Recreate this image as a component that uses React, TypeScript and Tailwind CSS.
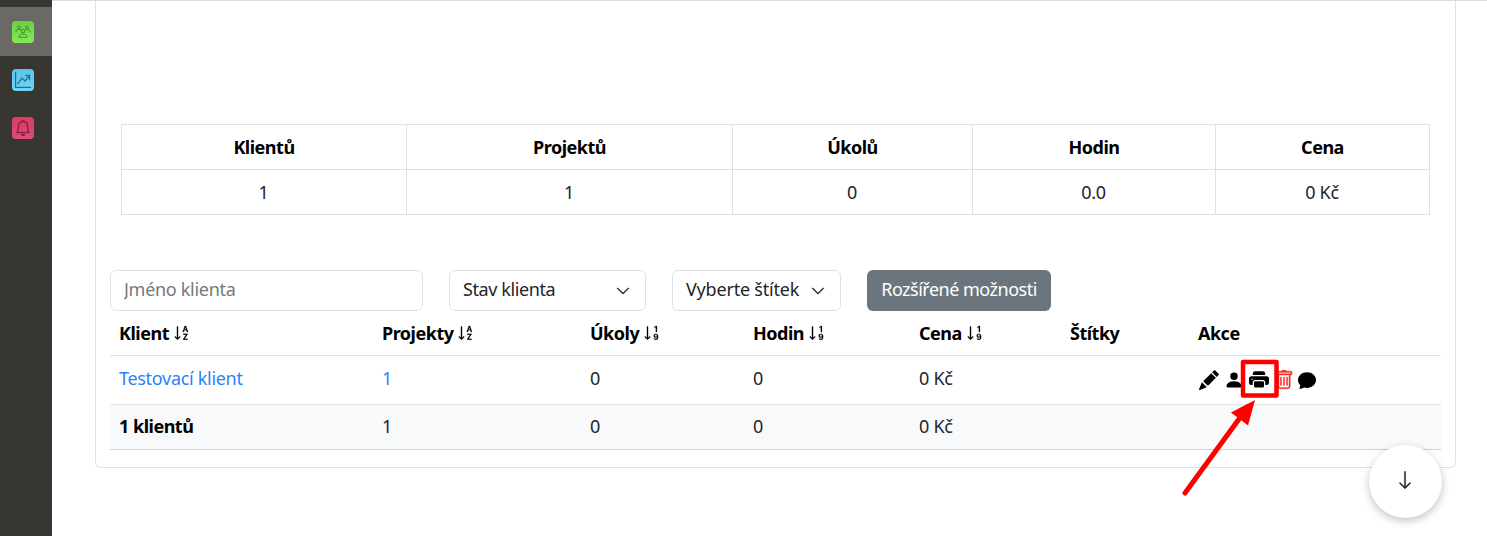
import React from "react";
import {
  BsArrowDown,
  BsBell,
  BsChatFill,
  BsChevronDown,
  BsGraphUpArrow,
  BsPencilFill,
  BsPersonFill,
  BsPrinterFill,
  BsSortAlphaDown,
  BsSortNumericDown,
  BsTrash,
} from "react-icons/bs";

const summary = [
  { label: "Klientů", value: "1", width: "w-[285px]" },
  { label: "Projektů", value: "1", width: "w-[326px]" },
  { label: "Úkolů", value: "0", width: "w-[240px]" },
  { label: "Hodin", value: "0.0", width: "w-[243px]" },
  { label: "Cena", value: "0 Kč", width: "w-[214px]" },
];

const columns = [
  { label: "Klient", sort: "alpha" },
  { label: "Projekty", sort: "alpha" },
  { label: "Úkoly", sort: "numeric" },
  { label: "Hodin", sort: "numeric" },
  { label: "Cena", sort: "numeric" },
  { label: "Štítky", sort: null },
  { label: "Akce", sort: null },
];

const grid = "grid grid-cols-[263px_208px_163px_166px_151px_128px_1fr] pl-[9px]";

function PeopleIcon() {
  return (
    <svg viewBox="0 0 16 14" className="h-[14px] w-4 fill-none stroke-[#3c8a2c] stroke-[0.9]">
      <circle cx="4" cy="2.6" r="1.5" />
      <circle cx="12" cy="2.6" r="1.5" />
      <circle cx="8" cy="6.2" r="1.8" />
      <path d="M0.8 7.2c0-2 1.4-2.8 3-2.8 1 0 1.6.3 2 .8M15.2 7.2c0-2-1.4-2.8-3-2.8-1 0-1.6.3-2 .8M3.9 12.3c0-2.2 1.5-3.2 4.1-3.2s4.1 1 4.1 3.2z" />
    </svg>
  );
}

export default function App() {
  return (
    <div className="relative flex h-[536px] w-full overflow-hidden bg-white font-['Noto_Sans',sans-serif] text-[18px] leading-[26px] tracking-[-0.3px] text-[#212529]">
      <aside className="flex w-[52px] shrink-0 flex-col bg-[#383631] pt-[7px]">
        <div className="flex h-[49px] items-center justify-center bg-[#6a6966] pr-[6px]">
          <span className="flex size-[22px] items-center justify-center rounded bg-linear-to-b from-[#68d23d] to-[#86e758]"><PeopleIcon /></span>
        </div>
        <div className="flex h-[49px] items-center justify-center pr-[6px] pb-px">
          <span className="flex size-[22px] items-center justify-center rounded bg-linear-to-b from-[#56c5ee] to-[#70d3f6]"><BsGraphUpArrow className="size-4 stroke-[0.4] text-[#2c6c84]" /></span>
        </div>
        <div className="flex h-[47px] items-center justify-center pr-[6px] pb-px">
          <span className="flex size-[22px] items-center justify-center rounded bg-linear-to-b from-[#d83a66] to-[#dd4d77]"><BsBell className="size-4 stroke-[0.4] text-[#86233f]" /></span>
        </div>
      </aside>

      <main className="flex-1 border-t border-[#dcdcdc] pl-[43px]">
        <section className="h-[467px] w-[1361px] rounded-b-md border border-t-0 border-[#dee2e6] pt-[123px]">
          <table className="ml-[25px] w-[1309px] table-fixed border-collapse text-center">
            <thead>
              <tr className="h-[45px]">
                {summary.map((s) => (
                  <th key={s.label} className={`${s.width} border border-[#dee2e6] p-0 pb-px font-bold tracking-[-0.5px] text-black`}>{s.label}</th>
                ))}
              </tr>
            </thead>
            <tbody>
              <tr className="h-[45px]">
                {summary.map((s) => (
                  <td key={s.label} className="border border-[#dee2e6] p-0 pr-px pb-px">{s.value}</td>
                ))}
              </tr>
            </tbody>
          </table>

          <div className="mt-[55px] flex h-[41px] pl-[14px]">
            <input placeholder="Jméno klienta" className="h-[41px] w-[313px] rounded-md border border-[#dee2e6] px-[13px] pb-[3px] placeholder-[#75797d]" />
            <button className="ml-[26px] flex w-[197px] items-center justify-between rounded-md border border-[#dee2e6] pr-[15px] pl-[13px]">
              <span className="-mt-[3px] tracking-[-0.4px]">Stav klienta</span>
              <BsChevronDown className="size-[14px] stroke-[0.9] text-[#343a40]" />
            </button>
            <button className="ml-[26px] flex w-[169px] items-center justify-between rounded-md border border-[#dee2e6] pr-[15px] pl-[13px]">
              <span className="-mt-[3px] tracking-[-0.2px] whitespace-nowrap">Vyberte štítek</span>
              <BsChevronDown className="size-[14px] stroke-[0.9] text-[#343a40]" />
            </button>
            <button className="ml-[26px] w-[184px] rounded-md bg-[#6c757d] pb-[3px] tracking-[-0.5px] whitespace-nowrap text-white">Rozšířené možnosti</button>
          </div>

          <div className="ml-[14px] w-[1331px]">
            <div className={`${grid} h-[45px] items-center border-b border-[#dee2e6] pb-px font-bold tracking-[-0.5px] text-black`}>
              {columns.map((c) => (
                <div key={c.label} className="flex items-center gap-[4px]">
                  {c.label}
                  {c.sort === "alpha" && <BsSortAlphaDown className="size-[18px] stroke-[0.2]" />}
                  {c.sort === "numeric" && <BsSortNumericDown className="size-[18px] stroke-[0.2]" />}
                </div>
              ))}
            </div>
            <div className={`${grid} h-[49px] items-center border-b border-[#dee2e6] pb-[4px]`}>
              <a className="text-[#2b7fff]">Testovací klient</a>
              <a className="text-[#2b7fff]">1</a>
              <span>0</span>
              <span>0</span>
              <span>0 Kč</span>
              <span />
              <div className="flex items-center gap-[5px] pt-[3px] pl-px text-black">
                <BsPencilFill className="size-5" />
                <BsPersonFill className="size-5" />
                <BsPrinterFill className="size-5" />
                <BsTrash className="size-5 stroke-[0.3] text-[#ff2a2a]" />
                <BsChatFill className="-ml-px size-[18px]" />
              </div>
            </div>
            <div className={`${grid} h-[45px] items-center border-b border-[#ced2d6] bg-[#f8f9fa] pb-[2px]`}>
              <span className="font-bold tracking-[-0.5px] text-black">1 klientů</span>
              <span>1</span>
              <span>0</span>
              <span>0</span>
              <span>0 Kč</span>
            </div>
          </div>
        </section>
      </main>

      <svg className="absolute top-[350px] left-[1170px] h-[160px] w-[120px]" viewBox="1170 350 120 160">
        <rect x="1243" y="362" width="33.500" height="33.500" fill="none" stroke="#f00" strokeWidth="4.500" strokeLinejoin="round" />
        <path d="M1185 493L1239 419" stroke="#f00" strokeWidth="5" strokeLinecap="round" />
        <path d="M1255 400L1231 412.500L1248 425.500Z" fill="#f00" />
      </svg>
      <button className="absolute top-[445px] left-[1369px] flex size-[73px] items-center justify-center rounded-full bg-white shadow-[0_3px_8px_rgba(0,0,0,0.24)]">
        <BsArrowDown className="size-5 -translate-x-px -translate-y-[2px] stroke-[0.3]" />
      </button>
    </div>
  );
}
